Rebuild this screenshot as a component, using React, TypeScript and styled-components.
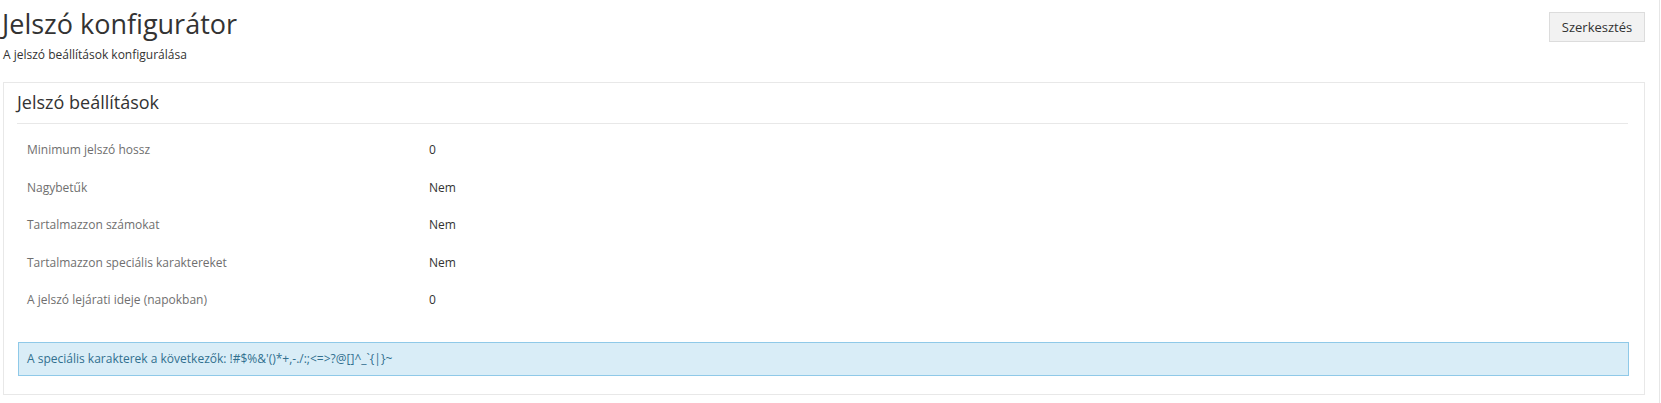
import React from "react";
import styled, { createGlobalStyle } from "styled-components";

const GlobalStyle = createGlobalStyle`
  html, body { margin: 0; padding: 0; background: #ffffff; }
  body { font-family: "Open Sans", "Liberation Sans", sans-serif; color: #333333; }
  * { box-sizing: border-box; }
`;

const Page = styled.div`
  width: 1660px;
  min-height: 403px;
  padding: 0 14px 0 3px;
  border-right: 1px solid #e6e6e6;
`;

const Header = styled.header`
  display: flex;
  justify-content: space-between;
  align-items: flex-start;
  height: 82px;
`;

const TitleBlock = styled.div`
  display: flex;
  flex-direction: column;
  gap: 6px;
  padding-top: 8px;
  margin-left: -1px;
`;

const Title = styled.h1`
  margin: 0;
  font-size: 27px;
  line-height: 32px;
  font-weight: 400;
  color: #333333;
`;

const Subtitle = styled.p`
  margin: 0 0 0 1px;
  font-size: 12px;
  line-height: 17px;
  color: #333333;
`;

const Button = styled.button`
  margin-top: 12px;
  width: 96px;
  height: 30px;
  padding: 0;
  font-family: "Open Sans", "Liberation Sans", sans-serif;
  font-size: 13px;
  color: #333333;
  background: #f2f2f2;
  border: 1px solid #dcdcdc;
  border-radius: 0;
  cursor: pointer;
`;

const Panel = styled.section`
  border: 1px solid #e8e8e8;
  padding: 0 16px 18px 13px;
`;

const PanelHeading = styled.h2`
  margin: 0;
  padding: 7px 0 9px 0;
  font-size: 18px;
  line-height: 24px;
  font-weight: 400;
  color: #333333;
  border-bottom: 1px solid #e8e8e8;
`;

const Rows = styled.div`
  display: grid;
  grid-template-columns: 402px 1fr;
  padding: 7px 0 0 10px;
`;

const Label = styled.div`
  height: 37.5px;
  display: flex;
  align-items: center;
  font-size: 12px;
  color: #6f6f6f;
`;

const Value = styled.div`
  height: 37.5px;
  display: flex;
  align-items: center;
  font-size: 12px;
  color: #333333;
`;

const Alert = styled.div`
  margin: 23px -1px 0 1px;
  padding: 7.5px 8px;
  font-size: 12px;
  line-height: 17px;
  color: #31708f;
  background: #d9edf7;
  border: 1px solid #8fc9e8;
`;

const settings: { label: string; value: string }[] = [
  { label: "Minimum jelszó hossz", value: "0" },
  { label: "Nagybetűk", value: "Nem" },
  { label: "Tartalmazzon számokat", value: "Nem" },
  { label: "Tartalmazzon speciális karaktereket", value: "Nem" },
  { label: "A jelszó lejárati ideje (napokban)", value: "0" },
];

export default function App() {
  return (
    <>
      <GlobalStyle />
      <Page>
        <Header>
          <TitleBlock>
            <Title>Jelszó konfigurátor</Title>
            <Subtitle>A jelszó beállítások konfigurálása</Subtitle>
          </TitleBlock>
          <Button>Szerkesztés</Button>
        </Header>
        <Panel>
          <PanelHeading>Jelszó beállítások</PanelHeading>
          <Rows>
            {settings.map((s) => (
              <React.Fragment key={s.label}>
                <Label>{s.label}</Label>
                <Value>{s.value}</Value>
              </React.Fragment>
            ))}
          </Rows>
          <Alert>
            A speciális karakterek a következők: !#$%&amp;'()*+,-./:;&lt;=&gt;?@[]^_`{"{|}"}~
          </Alert>
        </Panel>
      </Page>
    </>
  );
}
